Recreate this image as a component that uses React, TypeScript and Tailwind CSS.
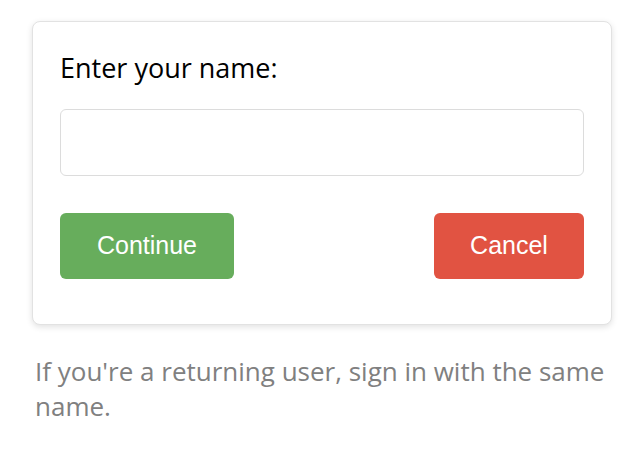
export default function App() {
  return (
    <div className="min-h-screen bg-white pt-[21px] pl-[32px] pr-[30px] font-['Open_Sans',sans-serif]">
      {/* Name card */}
      <div className="rounded-lg border border-[#e2e2e2] bg-white px-[27px] pt-[28px] pb-[45px] shadow-[0_2px_6px_rgba(0,0,0,0.12)]">
        <label className="block text-[27px] leading-[36px] text-black">Enter your name:</label>
        <input
          type="text"
          className="mt-[23px] block h-[67px] w-full rounded-md border border-[#dcdcdc] bg-white px-3 outline-none"
        />
        <div className="mt-[37px] flex items-center justify-between">
          <button className="h-[66px] w-[174px] rounded-md bg-[#67ad5c] font-['Liberation_Sans',sans-serif] text-[25px] text-white">
            Continue
          </button>
          <button className="h-[66px] w-[150px] rounded-md bg-[#e15342] font-['Liberation_Sans',sans-serif] text-[25px] text-white">
            Cancel
          </button>
        </div>
      </div>

      <p className="mt-[29px] pl-[3px] text-[26px] leading-[35px] text-[#808080]">
        If you're a returning user, sign in with the same name.
      </p>
    </div>
  );
}
